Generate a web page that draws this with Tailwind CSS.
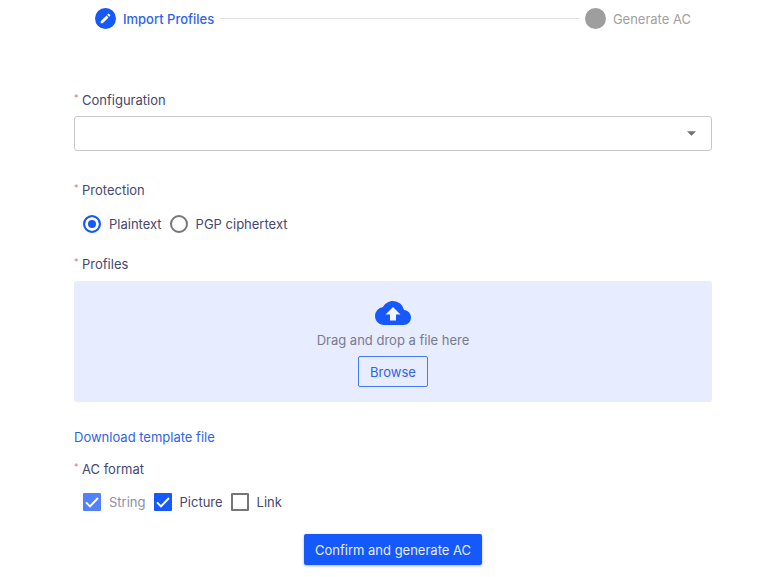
<!DOCTYPE html>
<html lang="en">
<head>
<meta charset="utf-8">
<meta name="viewport" content="width=device-width, initial-scale=1">
<title>Import Profiles</title>
<script src="https://cdn.jsdelivr.net/npm/@tailwindcss/browser@4"></script>
</head>
<body class="bg-white font-['Inter',sans-serif] text-[13px] leading-5 text-[#454870]">
<main class="pt-2 pr-[55px] pb-3 pl-[74px]">
  <ol class="flex items-center px-[21px]">
    <li class="flex items-center gap-[7px] font-medium text-[#2f63ea]" aria-current="step">
      <svg class="size-[21px]" viewBox="0 0 24 24" aria-hidden="true"><circle cx="12" cy="12" r="12" fill="#1558fb"/><path fill="#fff" d="M6.5 15.2v2.3h2.3l6.7-6.7-2.3-2.3zM17.4 8.9c.24-.24.24-.62 0-.86l-1.44-1.44a.61.61 0 0 0-.86 0l-1.2 1.2 2.3 2.3z"/></svg>
      Import Profiles
    </li>
    <li class="mx-[6px] h-px flex-1 bg-[#dedede]" role="presentation"></li>
    <li class="flex items-center gap-[7px] text-[#a0a0a0]">
      <span class="size-[21px] rounded-full bg-[#9e9e9e]"></span>
      Generate AC
    </li>
  </ol>

  <form class="mt-[61px] flex flex-col">
    <label for="configuration" class="flex"><span class="w-2 text-[9px] leading-4 text-[#e57373]">*</span>Configuration</label>
    <div class="mt-[6px] grid items-center">
      <select id="configuration" class="col-start-1 row-start-1 h-[35px] w-full appearance-none rounded-[3px] border border-[#c8c8c8] bg-white px-3"><option></option></select>
      <svg class="pointer-events-none col-start-1 row-start-1 mr-4 h-[5px] w-[9px] justify-self-end" viewBox="0 0 10 5" aria-hidden="true"><path d="M0 0h10L5 5z" fill="#707070"/></svg>
    </div>

    <fieldset class="mt-[29px]">
      <legend class="flex"><span class="w-2 text-[9px] leading-4 text-[#e57373]">*</span>Protection</legend>
      <div class="mt-[14px] flex gap-2 pl-[9px]">
        <label class="flex items-center gap-2"><input type="radio" name="protection" checked class="size-[18px] appearance-none rounded-full border-2 border-[#757575] checked:border-[#1558fb] checked:bg-[#1558fb] checked:shadow-[inset_0_0_0_3px_white]">Plaintext</label>
        <label class="flex items-center gap-2"><input type="radio" name="protection" class="size-[18px] appearance-none rounded-full border-2 border-[#757575] checked:border-[#1558fb] checked:bg-[#1558fb] checked:shadow-[inset_0_0_0_3px_white]">PGP ciphertext</label>
      </div>
    </fieldset>

    <h2 class="mt-5 flex"><span class="w-2 text-[9px] leading-4 text-[#e57373]">*</span>Profiles</h2>
    <section class="mt-[7px] flex flex-col items-center rounded-[3px] bg-[#e7ecff] pt-[14px] pb-[15px]">
      <svg class="size-9" viewBox="0 0 24 24" aria-hidden="true"><path fill="#1558fb" d="M19.35 10.04A7.49 7.49 0 0 0 12 4C9.11 4 6.6 5.64 5.35 8.04A5.994 5.994 0 0 0 0 14c0 3.31 2.69 6 6 6h13c2.76 0 5-2.24 5-5 0-2.64-2.05-4.78-4.65-4.96z"/><path fill="#f3f5ff" d="M14 13v4h-4v-4H7l5-5 5 5z"/></svg>
      <p class="-mt-px text-[#777b90]">Drag and drop a file here</p>
      <button type="button" class="mt-[6px] h-[31px] rounded-[2px] border border-[#447af5] px-[11px] text-[#2f63ea]">Browse</button>
    </section>

    <a href="#template" class="mt-[25px] self-start text-[#2f63ea]">Download template file</a>

    <fieldset class="mt-3">
      <legend class="flex"><span class="w-2 text-[9px] leading-4 text-[#e57373]">*</span>AC format</legend>
      <div class="mt-[13px] flex gap-2 pl-[9px]">
        <label class="flex items-center gap-2 text-[#8d8fa6]">
          <span class="grid size-[18px]"><input type="checkbox" checked disabled class="col-start-1 row-start-1 size-[18px] appearance-none rounded-[1px] bg-[#5282fb]"><svg class="pointer-events-none col-start-1 row-start-1 size-[18px]" viewBox="0 0 18 18" aria-hidden="true"><path d="M3 9.4l4 4L15 5" fill="none" stroke="#fff" stroke-width="2"/></svg></span>String
        </label>
        <label class="flex items-center gap-2">
          <span class="grid size-[18px]"><input type="checkbox" checked class="col-start-1 row-start-1 size-[18px] appearance-none rounded-[1px] bg-[#1558fb]"><svg class="pointer-events-none col-start-1 row-start-1 size-[18px]" viewBox="0 0 18 18" aria-hidden="true"><path d="M3 9.4l4 4L15 5" fill="none" stroke="#fff" stroke-width="2"/></svg></span>Picture
        </label>
        <label class="flex items-center gap-2"><input type="checkbox" class="size-[18px] appearance-none rounded-[1px] border-2 border-[#757575]">Link</label>
      </div>
    </fieldset>

    <button type="submit" class="mt-[22px] h-[31px] self-center rounded-[2px] bg-[#1558fb] px-[11px] text-[#e8eeff] shadow-[0_1px_3px_rgba(0,0,0,0.3)]">Confirm and generate AC</button>
  </form>
</main>
</body>
</html>
